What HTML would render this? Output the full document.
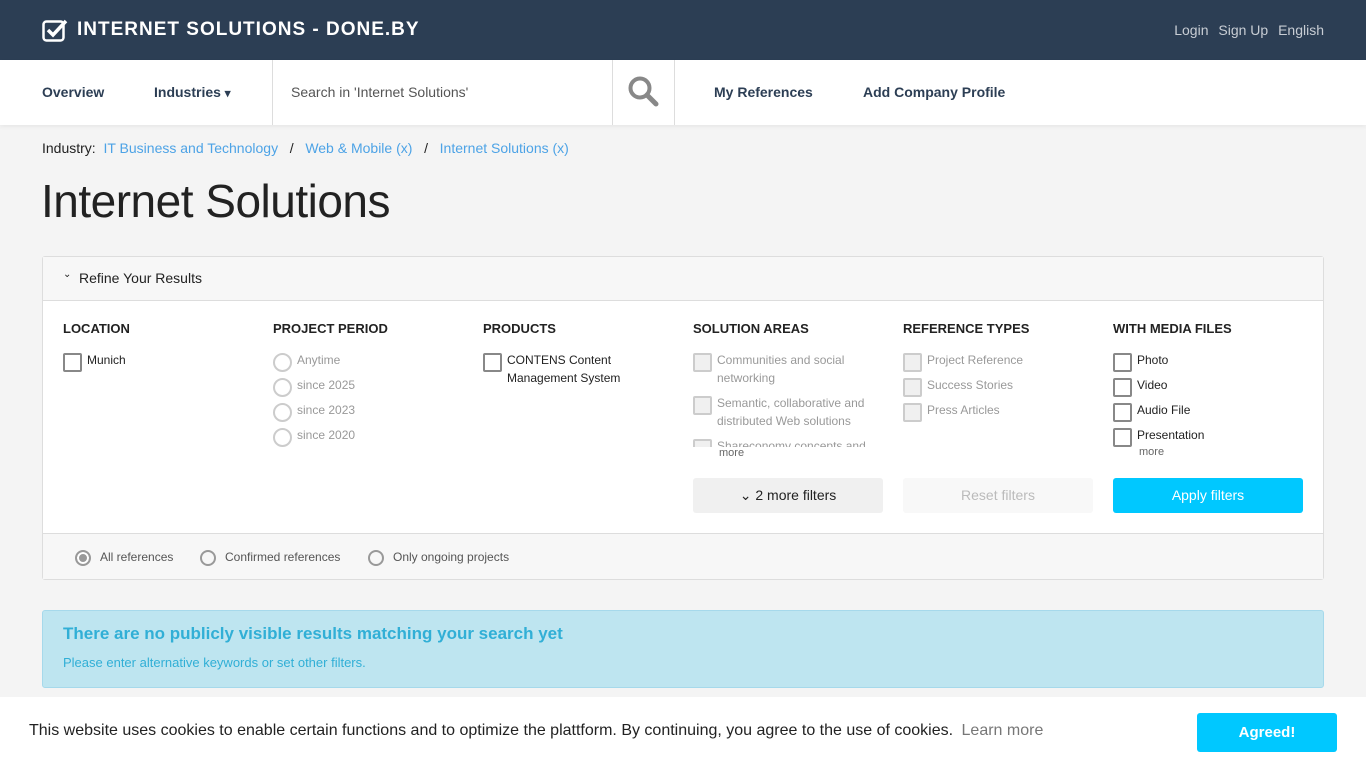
<!DOCTYPE html>
<html><head><meta charset="utf-8"><style>
*{box-sizing:border-box;margin:0;padding:0}
body{width:1366px;height:768px;overflow:hidden;background:#f4f4f4;font-family:"Liberation Sans",sans-serif;color:#222;position:relative}
.top{height:60px;background:#2c3e54;position:relative}
.logo{position:absolute;left:42px;top:18px;color:#fff;font-weight:bold;font-size:19px;letter-spacing:1px;display:flex;align-items:center}
.logo svg{margin-right:8px}
.tr{position:absolute;right:42px;top:22px;color:#c8cdd4;font-size:14px}
.tr span{margin-left:6px}
.nav{height:65px;background:#fff;position:relative;box-shadow:0 2px 4px rgba(0,0,0,.05)}
.nav .i{position:absolute;top:24px;font-size:14px;font-weight:bold;color:#2c3e54}
.srch{position:absolute;left:272px;top:0;width:403px;height:65px;border-left:1px solid #ddd;border-right:1px solid #ddd}
.srch .ph{position:absolute;left:18px;top:24px;color:#555;font-size:14px}
.srch .b{position:absolute;left:339px;top:0;width:1px;height:65px;background:#ddd}
.bc{position:absolute;top:140px;left:42px;font-size:14px}
.bc a{color:#4da3e6}
h1{position:absolute;top:174px;left:41px;font-weight:300;font-size:46px;color:#222;letter-spacing:-0.5px}
.panel{position:absolute;left:42px;top:256px;width:1282px;height:324px;background:#fff;border:1px solid #ddd;border-radius:3px}
.ph1{height:44px;border-bottom:1px solid #ddd;background:#f7f7f7;font-size:14px;padding:13px 0 0 36px;position:relative}
.col{position:absolute;top:64px;width:190px;font-size:12px}
.col h4{font-size:13px;font-weight:bold;margin-bottom:15px;color:#222}
.it{position:relative;padding-left:24px;margin-bottom:7px;line-height:18px;color:#222}
.it:before{content:"";position:absolute;left:0;top:2px;width:15px;height:15px;border:2px solid #888;border-radius:2px}
.g{color:#999}.g:before{border-color:#ccc;background:#f0f0f0}
.r:before{border-radius:50%;border-color:#ccc;background:#fff}
.btn{position:absolute;top:221px;width:190px;height:35px;font-size:14px;text-align:center;line-height:35px;border-radius:3px}
.foot{position:absolute;left:0;bottom:0;width:100%;height:46px;border-top:1px solid #ddd;background:#f7f7f7;font-size:12px;color:#555}
.foot span{position:absolute;top:16px}
.foot i{position:absolute;top:16px;width:16px;height:16px;border:2px solid #999;border-radius:50%}
.alert{position:absolute;left:42px;top:610px;width:1282px;height:78px;background:#bee5f0;border:1px solid #a6d9eb;border-radius:3px;color:#31afd6;padding:13px 20px}
.cookie{position:absolute;left:0;top:697px;width:1366px;height:71px;background:#fff;font-size:16px}
</style></head><body>
<div class="top"><div class="logo"><svg width="27" height="24" viewBox="0 0 27 24"><rect x="1.5" y="3.5" width="20" height="19" rx="3" fill="none" stroke="#fff" stroke-width="2.5"/><path d="M6 12l5 5 13-14" fill="none" stroke="#fff" stroke-width="3.5"/></svg>INTERNET SOLUTIONS - DONE.BY</div>
<div class="tr"><span>Login</span> <span>Sign Up</span> <span>English</span></div></div>
<div class="nav"><div class="i" style="left:42px">Overview</div><div class="i" style="left:154px">Industries <small>▾</small></div>
<div class="srch"><div class="ph">Search in 'Internet Solutions'</div><div class="b"></div>
<svg style="position:absolute;left:354px;top:15px" width="32" height="32" viewBox="0 0 32 32"><circle cx="13" cy="13" r="9.5" fill="none" stroke="#888" stroke-width="4"/><path d="M20 20l9 9" stroke="#888" stroke-width="5" stroke-linecap="round"/></svg></div>
<div class="i" style="left:714px">My References</div><div class="i" style="left:863px">Add Company Profile</div></div>
<div class="bc">Industry:&nbsp; <a>IT Business and Technology</a> &nbsp; / &nbsp; <a>Web &amp; Mobile (x)</a> &nbsp; / &nbsp; <a>Internet Solutions (x)</a></div>
<h1>Internet Solutions</h1>
<div class="panel"><div class="ph1"><span style="position:absolute;left:20px;top:12px;font-size:10px">⌄</span>Refine Your Results</div>
<div class="col" style="left:20px"><h4>LOCATION</h4><div class="it">Munich</div></div>
<div class="col" style="left:230px"><h4>PROJECT PERIOD</h4><div class="it g r">Anytime</div><div class="it g r">since 2025</div><div class="it g r">since 2023</div><div class="it g r">since 2020</div></div>
<div class="col" style="left:440px"><h4>PRODUCTS</h4><div class="it">CONTENS Content Management System</div></div>
<div class="col" style="left:650px;height:126px;overflow:hidden"><h4>SOLUTION AREAS</h4><div class="it g">Communities and social networking</div><div class="it g">Semantic, collaborative and distributed Web solutions</div><div class="it g">Shareconomy concepts and</div></div>
<div style="position:absolute;left:676px;top:190px;font-size:11px;color:#666;width:150px">more</div>
<div class="col" style="left:860px"><h4>REFERENCE TYPES</h4><div class="it g">Project Reference</div><div class="it g">Success Stories</div><div class="it g">Press Articles</div></div>
<div class="col" style="left:1070px"><h4>WITH MEDIA FILES</h4><div class="it">Photo</div><div class="it">Video</div><div class="it">Audio File</div><div class="it">Presentation</div><div style="font-size:11px;color:#666;padding-left:26px;margin-top:-5px">more</div></div>
<div class="btn" style="left:650px;background:#f0f0f0">⌄ 2 more filters</div>
<div class="btn" style="left:860px;background:#f8f8f8;color:#bbb">Reset filters</div>
<div class="btn" style="left:1070px;background:#00c8ff;color:#fff">Apply filters</div>
<div class="foot"><i style="left:32px;background:#999;box-shadow:inset 0 0 0 2px #fff"></i><span style="left:57px">All references</span><i style="left:157px"></i><span style="left:182px">Confirmed references</span><i style="left:325px"></i><span style="left:350px">Only ongoing projects</span></div></div>
<div class="alert"><div style="font-size:17px;font-weight:bold">There are no publicly visible results matching your search yet</div><div style="font-size:13px;margin-top:11px">Please enter alternative keywords or set other filters.</div></div>
<div class="cookie"><span style="position:absolute;left:29px;top:25px;font-size:16px">This website uses cookies to enable certain functions and to optimize the plattform. By continuing, you agree to the use of cookies. <span style="color:#777;margin-left:4px">Learn more</span></span>
<div style="position:absolute;left:1197px;top:16px;width:140px;height:39px;background:#00c8ff;color:#fff;font-weight:bold;font-size:15px;text-align:center;line-height:39px;border-radius:3px">Agreed!</div></div>
</body></html>
